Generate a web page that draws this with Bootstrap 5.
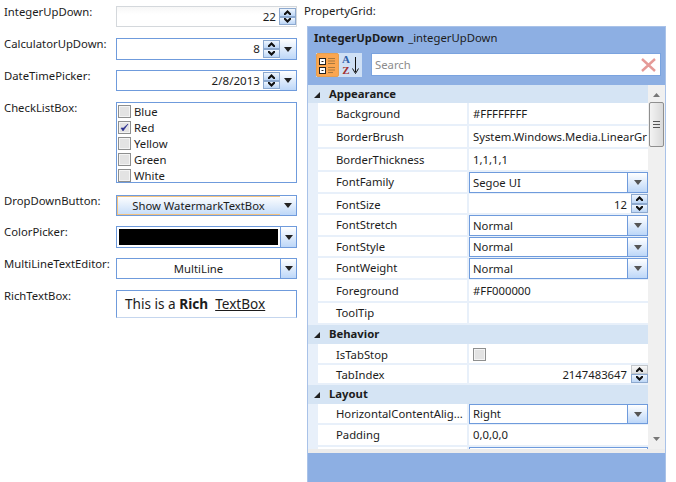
<!DOCTYPE html>
<html lang="en">
<head>
<meta charset="UTF-8">
<title>Toolkit Controls</title>
<link rel="stylesheet" href="https://cdn.jsdelivr.net/npm/bootstrap@5.3.0/dist/css/bootstrap.min.css">
<style>
html, body { height: 482px; overflow: hidden; }
body { background: #fff; color: #1c1c1c; font-family: "Noto Sans", "Liberation Sans", sans-serif; font-size: 11.3px; line-height: 14px; }
.lbl-col { width: 304px; padding: 6px 0 0 4px; flex: none; }
.fld-row { margin-bottom: 11px; }
.fld-row.g10 { margin-bottom: 10px; }
.fld-row.g12 { margin-bottom: 12px; }
.fld-lbl { width: 112px; flex: none; margin-top: -1px; }
.fld { width: 181px; height: 21px; border: 1px solid #6f9bdc; background: #fff; }
.fld.h22 { height: 22px; }
.fld.plain { border-color: #d4d8dc; background: linear-gradient(#f7f7f7, #fff 40%); }
.fld-val { flex: 1; text-align: right; padding-right: 3px; font-size: 11.6px; line-height: 19px; }
.fld-mid { flex: 1; text-align: center; line-height: 19px; }
.spin { width: 17px; flex: none; padding: 1px 0; }
.spin-btn { flex: 1; border: 1px solid #8da9cf; background: linear-gradient(#eef5fe, #bcd6f6); display: flex; align-items: center; justify-content: center; }
.spin-btn.off { border-color: #c4c8cc; background: linear-gradient(#f8f8f8, #dfe1e3); }
.drop-btn { width: 16px; flex: none; background: linear-gradient(#fff, #bdd7f8); display: flex; align-items: center; justify-content: center; }
.drop-btn.cut { border-left: 1px solid #6f9bdc; }
.chk-list { width: 181px; height: 81px; border: 1px solid #6f9bdc; padding: 2px 1px 0; }
.chk-item { height: 16px; }
.chk-box { width: 13px; height: 13px; flex: none; border: 1px solid #8e8f8f; background: #e3e3e3; box-shadow: inset 0 0 0 1px #f4f4f4; margin-right: 3px; display: flex; align-items: center; justify-content: center; }
.drop-main { border-color: #6f9bdc; box-shadow: inset 0 0 0 1px #f2c17f; background: linear-gradient(#fff, #c5dcf8); }
.color-bar { flex: 1; margin: 2px; background: #000; }
.rich { height: 28px; border-bottom-color: #c5d6ee; padding-left: 8px; font-size: 13.6px; line-height: 26px; }
.grid-col { width: 372px; flex: none; }
.grid-title { padding-top: 4px; height: 26px; }
.grid-panel { width: 359px; margin-left: 3px; height: 456px; background: #8dafe3; border: 1px solid #a9c2e8; border-bottom: 0; }
.grid-head { height: 58px; padding: 3px 4px 0 6px; }
.grid-name { line-height: 16px; height: 23px; }
.grid-tools { gap: 9px; padding-left: 2px; }
.tool-grp { width: 46px; height: 24px; background: #cfe0f5; }
.tool-on { width: 23px; height: 24px; background: #fba650; border: 1px solid #e5a052; border-radius: 2px; }
.tool-az { width: 23px; height: 24px; gap: 2px; }
.az-txt { font-family: "Liberation Serif", serif; font-weight: 700; font-size: 11px; line-height: 11px; text-align: center; }
.az-a { color: #2f5fa8; }
.az-z { color: #a33030; }
.grid-search { flex: 1; height: 23px; background: #fff; border: 1px solid #7aa3df; color: #8c8c8c; padding-left: 3px; line-height: 21px; }
.grid-body { height: 364px; background: #d5e4f4; overflow: hidden; }
.grid-rows { width: 340px; flex: none; }
.scroll-col { width: 17px; background: #f0f0f0; flex: none; height: 364px; }
.scroll-thumb { height: 45px; width: 15px; margin: 5px auto 0; border: 1px solid #8f8f8f; border-radius: 2px; background: linear-gradient(90deg, #f3f3f3, #d9d9d9); }
.cat-row { height: 18px; font-weight: 700; line-height: 18px; }
.cat-row.c19 { height: 19px; }
.cat-tog { width: 21px; padding-left: 6px; flex: none; }
.prop-row { padding-left: 10px; gap: 2px; background: #e8f0fa; }
.prop-row.r20 { height: 20px; } .prop-row.r21 { height: 21px; } .prop-row.r22 { height: 22px; } .prop-row.r23 { height: 23px; }
.prop-name { width: 149px; flex: none; background: #fff; padding-left: 18px; margin-bottom: 2px; white-space: nowrap; overflow: hidden; display: flex; align-items: center; }
.prop-val { flex: 1; background: #fff; padding-left: 4px; margin-bottom: 2px; white-space: nowrap; overflow: hidden; min-width: 0; display: flex; align-items: center; }
.prop-box { flex: 1; background: #fff; border: 1px solid #6f9bdc; padding-left: 3px; min-width: 0; margin-bottom: 1px; display: flex; align-items: center; }
.prop-box span { flex: 1; }
.prop-box .drop-btn { width: 20px; align-self: stretch; }
.prop-spin { width: 17px; flex: none; align-self: stretch; }
.prop-num { flex: 1; background: #fff; }
.txt-low { padding-top: 2px; }
.grid-foot { height: 4px; background: #ececec; }
</style>
</head>
<body>
<svg width="0" height="0" class="d-block">
  <symbol id="sUp" viewBox="0 0 7 5"><path d="M3.500 0 7 3.500V5H5.500L3.500 3 1.500 5H0V3.500z" fill="#111"/></symbol>
  <symbol id="sDn" viewBox="0 0 7 5"><path d="M0 0h1.500l2 2 2-2H7v1.500L3.500 5 0 1.500z" fill="#111"/></symbol>
  <symbol id="sDrop" viewBox="0 0 8 5"><path d="M0 0h8L4 5z" fill="#222"/></symbol>
  <symbol id="sGrey" viewBox="0 0 8 5"><path d="M0 0h8L4 5z" fill="#555"/></symbol>
  <symbol id="sCat" viewBox="0 0 6 6"><path d="M6 0v6H0z" fill="#222"/></symbol>
</svg>
<div class="d-flex">
  <div class="lbl-col">
    <div class="fld-row d-flex">
      <div class="fld-lbl">IntegerUpDown:</div>
      <div class="fld plain d-flex">
        <div class="fld-val">22</div>
        <div class="spin d-flex flex-column">
          <div class="spin-btn"><svg width="7" height="5"><use href="#sUp"/></svg></div>
          <div class="spin-btn"><svg width="7" height="5"><use href="#sDn"/></svg></div>
        </div>
      </div>
    </div>
    <div class="fld-row g10 d-flex">
      <div class="fld-lbl">CalculatorUpDown:</div>
      <div class="fld h22 d-flex">
        <div class="fld-val">8</div>
        <div class="spin d-flex flex-column">
          <div class="spin-btn"><svg width="7" height="5"><use href="#sUp"/></svg></div>
          <div class="spin-btn"><svg width="7" height="5"><use href="#sDn"/></svg></div>
        </div>
        <div class="drop-btn"><svg width="8" height="5"><use href="#sDrop"/></svg></div>
      </div>
    </div>
    <div class="fld-row d-flex">
      <div class="fld-lbl">DateTimePicker:</div>
      <div class="fld d-flex">
        <div class="fld-val">2/8/2013</div>
        <div class="spin d-flex flex-column">
          <div class="spin-btn"><svg width="7" height="5"><use href="#sUp"/></svg></div>
          <div class="spin-btn"><svg width="7" height="5"><use href="#sDn"/></svg></div>
        </div>
        <div class="drop-btn"><svg width="8" height="5"><use href="#sDrop"/></svg></div>
      </div>
    </div>
    <div class="fld-row g12 d-flex">
      <div class="fld-lbl">CheckListBox:</div>
      <div class="chk-list">
        <div class="chk-item d-flex"><span class="chk-box"></span>Blue</div>
        <div class="chk-item d-flex"><span class="chk-box"><svg width="9" height="9" viewBox="0 0 9 9"><path d="M1 5l2 3 5-7-4.500 4z" fill="#2b2f8f" stroke="#2b2f8f" stroke-width=".6"/></svg></span>Red</div>
        <div class="chk-item d-flex"><span class="chk-box"></span>Yellow</div>
        <div class="chk-item d-flex"><span class="chk-box"></span>Green</div>
        <div class="chk-item d-flex"><span class="chk-box"></span>White</div>
      </div>
    </div>
    <div class="fld-row g10 d-flex">
      <div class="fld-lbl">DropDownButton:</div>
      <div class="fld drop-main d-flex">
        <div class="fld-mid">Show WatermarkTextBox</div>
        <div class="drop-btn bg-transparent"><svg width="8" height="5"><use href="#sDrop"/></svg></div>
      </div>
    </div>
    <div class="fld-row g10 d-flex">
      <div class="fld-lbl">ColorPicker:</div>
      <div class="fld h22 d-flex">
        <div class="color-bar"></div>
        <div class="drop-btn cut"><svg width="8" height="5"><use href="#sDrop"/></svg></div>
      </div>
    </div>
    <div class="fld-row d-flex">
      <div class="fld-lbl">MultiLineTextEditor:</div>
      <div class="fld d-flex">
        <div class="fld-mid">MultiLine</div>
        <div class="drop-btn cut"><svg width="8" height="5"><use href="#sDrop"/></svg></div>
      </div>
    </div>
    <div class="d-flex">
      <div class="fld-lbl">RichTextBox:</div>
      <div class="fld rich">This is a <b>Rich</b>&nbsp; <u>TextBox</u></div>
    </div>
  </div>

  <div class="grid-col">
    <div class="grid-title">PropertyGrid:</div>
    <div class="grid-panel">
      <div class="grid-head">
        <div class="grid-name d-flex gap-1"><b>IntegerUpDown</b><span>_integerUpDown</span></div>
        <div class="grid-tools d-flex">
          <div class="tool-grp d-flex">
            <div class="tool-on d-flex align-items-center justify-content-center">
              <svg width="19" height="19" viewBox="0 0 19 19">
                <rect x="1.500" y="2.500" width="6" height="6" fill="#fff" stroke="#222"/><rect x="3.500" y="5" width="2" height="1" fill="#222"/>
                <rect x="1.500" y="11.500" width="6" height="6" fill="#fff" stroke="#222"/><rect x="3.500" y="14" width="2" height="1" fill="#222"/>
                <path d="M10 2.500h7M10 5h7M10 7.500h7M10 11.500h7M10 14h7M10 16.500h5" stroke="#a8793f" stroke-width="1"/>
              </svg>
            </div>
            <div class="tool-az d-flex align-items-center justify-content-center">
              <div class="az-txt"><div class="az-a">A</div><div class="az-z">Z</div></div>
              <svg width="7" height="17" viewBox="0 0 7 17"><path d="M3.500 0v15M.5 11.500l3 5 3-5" fill="none" stroke="#111" stroke-width="1"/></svg>
            </div>
          </div>
          <div class="grid-search d-flex justify-content-between">
            <span>Search</span>
            <svg class="me-1 mt-1" width="15" height="14" viewBox="0 0 15 14"><path d="M1 1l13 12M14 1L1 13" stroke="#e59a97" stroke-width="2.400"/></svg>
          </div>
        </div>
      </div>
      <div class="grid-body d-flex">
        <div class="grid-rows">
          <div class="cat-row d-flex"><div class="cat-tog"><svg width="6" height="6"><use href="#sCat"/></svg></div>Appearance</div>
          <div class="prop-row r23 d-flex"><div class="prop-name">Background</div><div class="prop-val">#FFFFFFFF</div></div>
          <div class="prop-row r23 d-flex"><div class="prop-name">BorderBrush</div><div class="prop-val">System.Windows.Media.LinearGr</div></div>
          <div class="prop-row r23 d-flex"><div class="prop-name">BorderThickness</div><div class="prop-val">1,1,1,1</div></div>
          <div class="prop-row r22 d-flex"><div class="prop-name">FontFamily</div><div class="prop-box"><span>Segoe UI</span><div class="drop-btn cut"><svg width="8" height="5"><use href="#sGrey"/></svg></div></div></div>
          <div class="prop-row r21 d-flex"><div class="prop-name txt-low">FontSize</div><div class="prop-val pe-0"><div class="prop-num text-end pe-1 txt-low">12</div><div class="spin prop-spin d-flex flex-column p-0"><div class="spin-btn"><svg width="7" height="5"><use href="#sUp"/></svg></div><div class="spin-btn"><svg width="7" height="5"><use href="#sDn"/></svg></div></div></div></div>
          <div class="prop-row r22 d-flex"><div class="prop-name">FontStretch</div><div class="prop-box"><span>Normal</span><div class="drop-btn cut"><svg width="8" height="5"><use href="#sGrey"/></svg></div></div></div>
          <div class="prop-row r21 d-flex"><div class="prop-name">FontStyle</div><div class="prop-box"><span>Normal</span><div class="drop-btn cut"><svg width="8" height="5"><use href="#sGrey"/></svg></div></div></div>
          <div class="prop-row r22 d-flex"><div class="prop-name">FontWeight</div><div class="prop-box"><span>Normal</span><div class="drop-btn cut"><svg width="8" height="5"><use href="#sGrey"/></svg></div></div></div>
          <div class="prop-row r23 d-flex"><div class="prop-name">Foreground</div><div class="prop-val">#FF000000</div></div>
          <div class="prop-row r22 d-flex"><div class="prop-name">ToolTip</div><div class="prop-val"></div></div>
          <div class="cat-row c19 d-flex"><div class="cat-tog"><svg width="6" height="6"><use href="#sCat"/></svg></div>Behavior</div>
          <div class="prop-row r21 d-flex"><div class="prop-name txt-low">IsTabStop</div><div class="prop-val txt-low"><span class="chk-box"></span></div></div>
          <div class="prop-row r20 d-flex"><div class="prop-name txt-low">TabIndex</div><div class="prop-val pe-0"><div class="prop-num text-end pe-1 txt-low">2147483647</div><div class="spin prop-spin d-flex flex-column p-0"><div class="spin-btn off"><svg width="7" height="5"><use href="#sUp"/></svg></div><div class="spin-btn"><svg width="7" height="5"><use href="#sDn"/></svg></div></div></div></div>
          <div class="cat-row c19 d-flex"><div class="cat-tog"><svg width="6" height="6"><use href="#sCat"/></svg></div>Layout</div>
          <div class="prop-row r21 d-flex"><div class="prop-name">HorizontalContentAlig...</div><div class="prop-box"><span>Right</span><div class="drop-btn cut"><svg width="8" height="5"><use href="#sGrey"/></svg></div></div></div>
          <div class="prop-row r22 d-flex"><div class="prop-name">Padding</div><div class="prop-val">0,0,0,0</div></div>
          <div class="prop-row r22 d-flex"><div class="prop-name"></div><div class="prop-box"></div></div>
        </div>
        <div class="scroll-col d-flex flex-column align-items-center">
          <svg class="mt-2" width="7" height="4" viewBox="0 0 7 4"><path d="M3.500 0 7 4H0z" fill="#777"/></svg>
          <div class="scroll-thumb d-flex align-items-center justify-content-center">
            <svg width="7" height="7" viewBox="0 0 7 7"><path d="M0 .5h7M0 3.500h7M0 6.500h7" stroke="#555"/></svg>
          </div>
          <svg class="mt-auto mb-2" width="7" height="4" viewBox="0 0 7 4"><path d="M0 0h7L3.500 4z" fill="#777"/></svg>
        </div>
      </div>
      <div class="grid-foot"></div>
    </div>
  </div>
</div>
</body>
</html>
